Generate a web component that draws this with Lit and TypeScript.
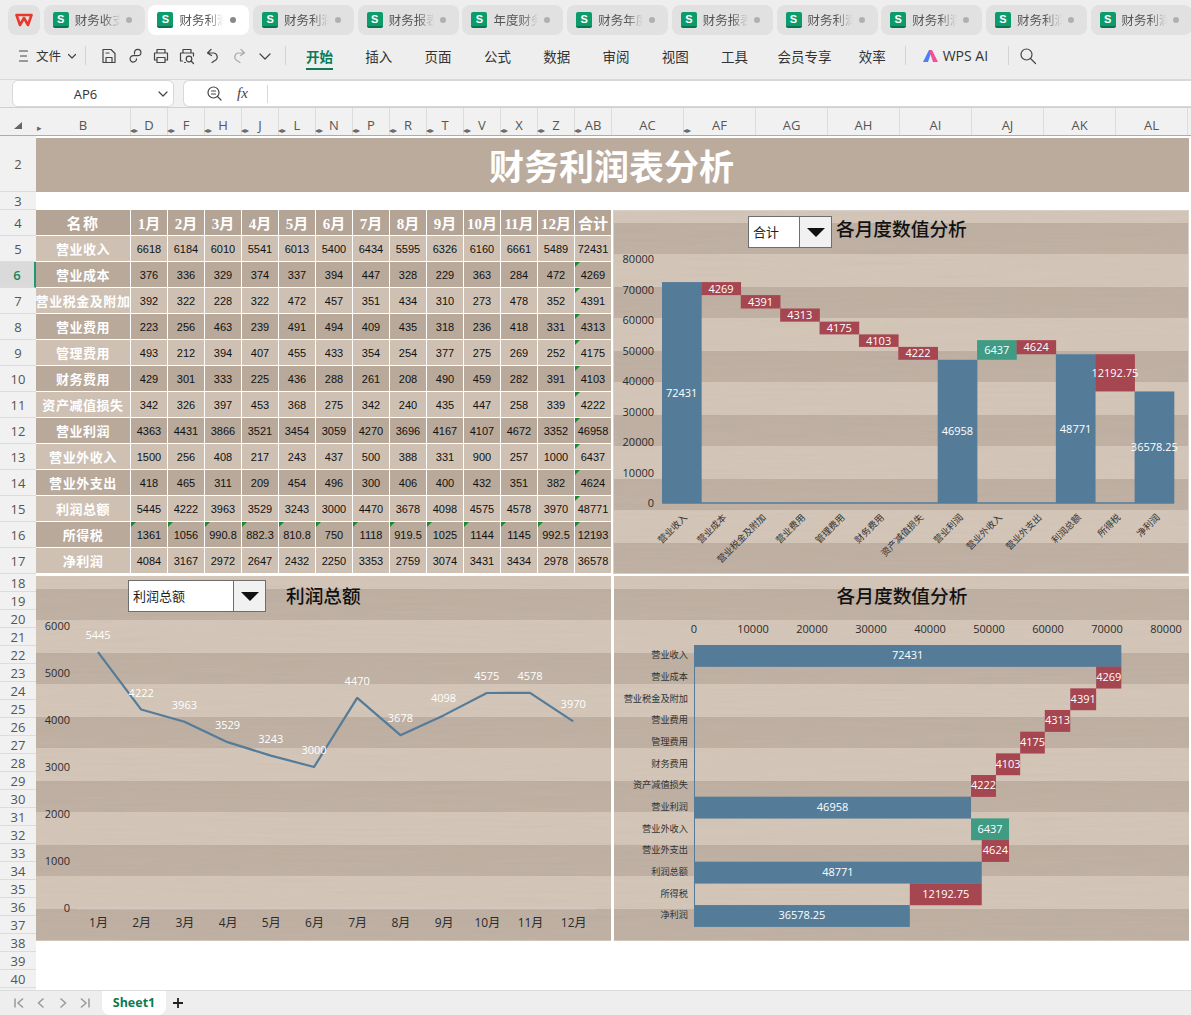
import { LitElement, html, css, svg } from "lit";
import { customElement } from "lit/decorators.js";

const MONTHS = ["1月","2月","3月","4月","5月","6月","7月","8月","9月","10月","11月","12月"];
const ROWS: [string, string[]][] = [
  ["营业收入","6618 6184 6010 5541 6013 5400 6434 5595 6326 6160 6661 5489 72431".split(" ")],
  ["营业成本","376 336 329 374 337 394 447 328 229 363 284 472 4269".split(" ")],
  ["营业税金及附加","392 322 228 322 472 457 351 434 310 273 478 352 4391".split(" ")],
  ["营业费用","223 256 463 239 491 494 409 435 318 236 418 331 4313".split(" ")],
  ["管理费用","493 212 394 407 455 433 354 254 377 275 269 252 4175".split(" ")],
  ["财务费用","429 301 333 225 436 288 261 208 490 459 282 391 4103".split(" ")],
  ["资产减值损失","342 326 397 453 368 275 342 240 435 447 258 339 4222".split(" ")],
  ["营业利润","4363 4431 3866 3521 3454 3059 4270 3696 4167 4107 4672 3352 46958".split(" ")],
  ["营业外收入","1500 256 408 217 243 437 500 388 331 900 257 1000 6437".split(" ")],
  ["营业外支出","418 465 311 209 454 496 300 406 400 432 351 382 4624".split(" ")],
  ["利润总额","5445 4222 3963 3529 3243 3000 4470 3678 4098 4575 4578 3970 48771".split(" ")],
  ["所得税","1361 1056 990.8 882.3 810.8 750 1118 919.5 1025 1144 1145 992.5 12193".split(" ")],
  ["净利润","4084 3167 2972 2647 2432 2250 3353 2759 3074 3431 3434 2978 36578".split(" ")],
];
const WF: { name: string; from: number; to: number; kind: string; label: string }[] = [
  ["营业收入",0,72431,"b","72431"],["营业成本",68162,72431,"r","4269"],["营业税金及附加",63771,68162,"r","4391"],
  ["营业费用",59458,63771,"r","4313"],["管理费用",55283,59458,"r","4175"],["财务费用",51180,55283,"r","4103"],
  ["资产减值损失",46958,51180,"r","4222"],["营业利润",0,46958,"b","46958"],["营业外收入",46958,53395,"g","6437"],
  ["营业外支出",48771,53395,"r","4624"],["利润总额",0,48771,"b","48771"],["所得税",36578.25,48771,"r","12192.75"],
  ["净利润",0,36578.25,"b","36578.25"],
].map((a: any) => ({ name: a[0], from: a[1], to: a[2], kind: a[3], label: a[4] }));
const COLOR: Record<string, string> = { b: "#547c99", r: "#a54651", g: "#3f9b83" };
const PROFIT = [5445,4222,3963,3529,3243,3000,4470,3678,4098,4575,4578,3970];

const TABS = ["财务收支","财务利润","财务利润","财务报表","年度财务","财务年度","财务报表","财务利润","财务利润","财务利润","财务利润"];
const COLS: [string, number, boolean][] = [
  ["B",95,true],["D",37,true],["F",37,true],["H",37,true],["J",37,true],["L",37,true],["N",37,true],["P",37,true],
  ["R",37,true],["T",37,true],["V",37,true],["X",37,true],["Z",37,true],["AB",37,false],["AC",72,true],
  ["AF",72,false],["AG",72,false],["AH",72,false],["AI",72,false],["AJ",72,false],["AK",72,false],["AL",72,false],
];
const MENU = ["插入","页面","公式","数据","审阅","视图","工具"];

function stripes(x: number, y: number, w: number, h: number) {
  const out = [svg`<rect x=${x} y=${y} width=${w} height=${h} fill="url(#lt)"/>`];
  for (let s = y + 13; s < y + h; s += 64) {
    out.push(svg`<rect x=${x} y=${s} width=${w} height=${Math.min(31, y + h - s)} fill="url(#dk)"/>`);
  }
  out.push(svg`<rect x=${x} y=${y} width=${w} height=${h} filter="url(#grain)" opacity="0.07"/>`);
  return out;
}
const defs = svg`<defs>
  <linearGradient id="lt" x1="0" y1="0" x2="0" y2="1"><stop offset="0" stop-color="#d3c5b7"/><stop offset="1" stop-color="#d3c5b7"/></linearGradient>
  <linearGradient id="dk" x1="0" y1="0" x2="0" y2="1"><stop offset="0" stop-color="#bdaea0"/><stop offset="1" stop-color="#bfb0a2"/></linearGradient>
  <filter id="grain" x="0" y="0" width="100%" height="100%"><feTurbulence type="fractalNoise" baseFrequency="0.012 0.35" numOctaves="2" seed="4"/><feColorMatrix type="saturate" values="0"/></filter>
</defs>`;

@customElement("app-root")
export class AppRoot extends LitElement {
  static styles = css`
    :host { display: block; width: 1191px; height: 1015px; overflow: hidden; background: #fff; font-family: "Noto Sans CJK SC", "Noto Sans", sans-serif; color: #333; }
    .tabbar { height: 36px; background: #eeeeee; display: flex; gap: 3.7px; padding: 5px 0 0 8px; box-sizing: border-box; overflow: hidden; }
    .logo { width: 32px; height: 30px; flex: none; border-radius: 8px; background: #e1e1e1; display: flex; align-items: center; justify-content: center; }
    .tab { width: 101px; height: 30px; flex: none; border-radius: 8px; background: #e1e1e1; display: flex; align-items: center; padding-left: 9px; box-sizing: border-box; }
    .tab.on { background: #fff; }
    .s { width: 16px; height: 16px; flex: none; border-radius: 2px; background: #0c9b6b; border-bottom: 2px solid #06754f; box-sizing: border-box; color: #fff; font: 700 11px/14px "Liberation Sans", sans-serif; text-align: center; }
    .tname { width: 50px; margin-left: 6px; font-size: 12.5px; line-height: 30px; white-space: nowrap; color: #555; -webkit-mask-image: linear-gradient(90deg, #000 56%, transparent 90%); mask-image: linear-gradient(90deg, #000 56%, transparent 90%); }
    .dot { width: 6px; height: 6px; border-radius: 50%; background: #b0b0b0; margin-left: 1px; flex: none; }
    .tab.on .dot { background: #888; }

    .toolbar { height: 44px; background: #eeeeee; border-bottom: 1px solid #d9d9d9; box-sizing: border-box; display: flex; align-items: center; padding: 0 0 4px 18px; }
    .file { font-size: 12.5px; margin-left: 6px; color: #333; }
    .ic { display: block; flex: none; fill: none; stroke: #444; stroke-width: 1.2; stroke-linecap: round; stroke-linejoin: round; }
    .ic.dim { stroke: #aaa; }
    .sep { width: 1px; height: 19px; background: #d4d4d4; flex: none; }
    .tools { display: flex; align-items: center; gap: 8px; margin: 0 11px 0 14px; }
    .menu { display: flex; gap: 32.3px; align-items: center; margin-left: 20px; margin-right: 19px; }
    .mi { font-size: 13.5px; color: #333; line-height: 24px; white-space: nowrap; }
    .mi.wide { margin: 0 -5px 0 -3px; }
    .mi.on { color: #0b7a55; font-weight: 700; position: relative; }
    .mi.on::after { content: ""; position: absolute; left: 0; right: 0; bottom: -2px; height: 2px; background: #0b7a55; }
    .ai { display: flex; align-items: center; gap: 4px; font: 14px "Open Sans", sans-serif; margin: 0 20px 0 17px; color: #333; }

    .fbar { height: 28px; background: #f1f1f1; display: flex; border-bottom: 1px solid #cfcfcf; box-sizing: border-box; padding-left: 12px; gap: 9px; }
    .namebox { width: 162px; background: #fff; border: 1px solid #d8d8d8; border-radius: 6px; box-sizing: border-box; display: flex; align-items: center; height: 27px; padding: 0 5px 0 0; font: 13px "Open Sans", sans-serif; }
    .namebox span { flex: 1; text-align: center; color: #333; }
    .fbox { flex: 1; background: #fff; border: 1px solid #d8d8d8; border-right: 0; border-radius: 6px 0 0 6px; height: 27px; box-sizing: border-box; display: flex; align-items: center; padding-left: 22px; gap: 14px; }
    .fx { font: italic 15px "Liberation Serif", serif; color: #444; width: 16px; }
    .fsep { width: 1px; height: 18px; background: #d8d8d8; }

    .colhdr { height: 28px; display: flex; background: #f1f1f1; border-bottom: 1px solid #b9a99a; box-sizing: border-box; font: 13px "Open Sans", sans-serif; color: #555; }
    .corner { width: 36px; flex: none; position: relative; }
    .corner::after { content: ""; position: absolute; left: 14px; top: 14px; border-left: 8px solid transparent; border-bottom: 7px solid #666; }
    .corner::before { content: "▸"; position: absolute; left: 37px; top: 14px; font-size: 9px; line-height: 12px; color: #666; }
    .ch { flex: none; box-sizing: border-box; border-right: 1px solid #dcdcdc; display: flex; align-items: center; justify-content: center; position: relative; padding-top: 7px; }
    .mk { position: absolute; right: -8px; bottom: 0; font-size: 8px; line-height: 11px; color: #666; letter-spacing: 0; z-index: 2; white-space: nowrap; }

    .sheet { display: flex; height: 854px; }
    .rowhdr { width: 36px; flex: none; background: #f1f1f1; display: flex; flex-direction: column; font: 13px "Open Sans", sans-serif; color: #555; overflow: hidden; }
    .rh { flex: none; display: flex; align-items: center; justify-content: center; box-sizing: border-box; border-bottom: 1px solid #dcdcdc; }
    .rh.sel { background: #dadada; color: #0f8a60; border-right: 2px solid #1b9a70; font-weight: 600; }
    .canvas { flex: 1; padding-top: 2px; display: flex; flex-direction: column; min-width: 0; }
    .title { width: 1153px; height: 54px; flex: none; box-sizing: border-box; padding-right: 2px; background: #baab9c; color: #fff; font-size: 35px; font-weight: 700; line-height: 54px; text-align: center; margin-bottom: 18px; }
    .upper { display: flex; gap: 1px; flex: none; height: 364px; margin-bottom: 2px; }
    .lower { display: flex; gap: 3px; flex: none; height: 365px; }

    .table { width: 576px; display: grid; grid-template-columns: 95px repeat(13, 37px); grid-auto-rows: 26px; flex: none; }
    .c { box-sizing: border-box; border-right: 1px solid #fff; border-bottom: 1px solid #fff; display: flex; align-items: center; justify-content: center; position: relative; font: 11px "Liberation Sans", sans-serif; color: #111; white-space: nowrap; overflow: hidden; }
    .lt { background: #cec1b4; }
    .dk { background: #b8a99b; }
    .hd { background: #b3a495; color: #fff; font: 700 15px "Liberation Serif", "Noto Sans CJK SC", serif; }
    .nm { color: #fff; font: 700 13px "Noto Sans CJK SC", sans-serif; letter-spacing: 0.55px; }
    .hname { letter-spacing: 1.5px; }
    .tri::before { content: ""; position: absolute; left: 0; top: 0; border-top: 5px solid #178a2f; border-right: 5px solid transparent; }

    .chart { position: relative; flex: none; height: 100%; }
    .chart svg { display: block; }
    .w576 { width: 576px; }
    .w575 { width: 575px; }
    .ctitle { font: 500 18.7px "Noto Sans CJK SC", sans-serif; fill: #111; }
    .tk { font: 11px "Open Sans", "Noto Sans CJK SC", sans-serif; fill: #2b2b2b; }
    .mo { font: 12px "Open Sans", "Noto Sans CJK SC", sans-serif; fill: #2b2b2b; }
    .cat { font: 9.2px "Noto Sans CJK SC", sans-serif; fill: #333; }
    .val { font: 11px "Open Sans", sans-serif; fill: #fff; }
    .dd { position: absolute; display: flex; background: #fff; border: 1px solid #6e6e6e; box-sizing: border-box; font-size: 13px; color: #222; height: 32px; }
    .dd .txt { flex: 1; padding-left: 4px; line-height: 30px; }
    .dd .arrow { width: 31px; background: #f1f1f1; border-left: 1px solid #6e6e6e; display: flex; align-items: center; justify-content: center; flex: none; }
    .dd .arrow i { border-left: 9px solid transparent; border-right: 9px solid transparent; border-top: 9px solid #111; }
    .dd1 { left: 135px; top: 6px; width: 84px; }
    .dd2 { left: 92px; top: 4px; width: 138px; }

    .footer { height: 25px; background: #eeeeee; border-top: 1px solid #dcdcdc; box-sizing: border-box; display: flex; align-items: center; padding-left: 13px; gap: 10px; }
    .nav { stroke: #9a9a9a; stroke-width: 1.5; fill: none; display: block; flex: none; }
    .stab { width: 64px; height: 24px; margin: -1px 0 0 1px; background: #fff; border-radius: 0 0 8px 8px; text-align: center; font: 700 12.5px/23px "Open Sans", sans-serif; color: #0d7a50; }
    .plus { stroke: #222; stroke-width: 1.8; flex: none; display: block; margin-left: -4px; }
  `;

  private waterfall() {
    const X0 = 662, BW = (1174 - 662) / 13, Y0 = 503, K = 30.5 / 10000;
    return svg`<svg width="576" height="364" viewBox="613 210 576 364">${defs}${stripes(613, 210, 576, 364)}
      <rect x="613.5" y="210.5" width="575" height="363" fill="none" stroke="#d8d0c8"/>
      <text class="ctitle" x="836" y="236">各月度数值分析</text>
      ${[0,1,2,3,4,5,6,7,8].map((i) => svg`<text class="tk" x="654" y=${Y0 - i * 30.5 + 4} text-anchor="end">${i ? i * 10000 : 0}</text>`)}
      ${WF.map((b, i) => {
        const x = X0 + i * BW, top = Y0 - b.to * K, h = (b.to - b.from) * K, ex = x + BW / 2 + 6;
        return svg`<rect x=${x} y=${top} width=${BW + 0.3} height=${h} fill=${COLOR[b.kind]}/>
          <text class="val" x=${x + BW / 2} y=${top + h / 2 + 4} text-anchor="middle">${b.label}</text>
          <text class="cat" text-anchor="end" x=${ex} y="518" transform="rotate(-45 ${ex} 518)">${b.name}</text>`;
      })}
      <line x1="662" x2="1174" y1="503" y2="503" stroke="#547c99" stroke-width="1.5"/>
    </svg>`;
  }

  private line() {
    const xAt = (i: number) => 98 + i * 43.2, yAt = (v: number) => 908 - v * 0.047;
    const pts = PROFIT.map((v, i) => `${xAt(i)},${yAt(v)}`).join(" ");
    return svg`<svg width="575" height="365" viewBox="36 576 575 365">${defs}${stripes(36, 576, 575, 365)}
      <text class="ctitle" x="286" y="603">利润总额</text>
      ${[0,1,2,3,4,5,6].map((i) => svg`<text class="tk" x="70" y=${908 - i * 47 + 4} text-anchor="end">${i * 1000}</text>`)}
      <line x1="77" x2="596" y1="908.5" y2="908.5" stroke="#d3cbc2" stroke-width="1.5"/>
      <polyline points=${pts} fill="none" stroke="#547c99" stroke-width="2.2" stroke-linejoin="round"/>
      ${PROFIT.map((v, i) => svg`<text class="val" x=${xAt(i)} y=${yAt(v) - 13} text-anchor="middle">${v}</text>`)}
      ${MONTHS.map((m, i) => svg`<text class="mo" x=${xAt(i) + 0.5} y="927" text-anchor="middle">${m}</text>`)}
    </svg>`;
  }

  private hbars() {
    const X0 = 694, K = 59 / 10000, Y0 = 645, BH = 21.67;
    return svg`<svg width="575" height="365" viewBox="614 576 575 365">${defs}${stripes(614, 576, 575, 365)}
      <text class="ctitle" x="902" y="603" text-anchor="middle">各月度数值分析</text>
      ${[0,1,2,3,4,5,6,7,8].map((i) => svg`<text class="tk" x=${X0 + i * 59} y="633" text-anchor="middle">${i * 10000}</text>`)}
      <line x1="694.5" x2="694.5" y1="645" y2="927" stroke="#547c99"/>
      ${WF.map((b, i) => {
        const y = Y0 + i * BH, x = X0 + b.from * K, w = (b.to - b.from) * K;
        return svg`<rect x=${x} y=${y} width=${w} height=${BH + 0.2} fill=${COLOR[b.kind]}/>
          <text class="val" x=${x + w / 2} y=${y + BH / 2 + 3.5} text-anchor="middle">${b.label}</text>
          <text class="cat" x="688" y=${y + BH / 2 + 2.5} text-anchor="end">${b.name}</text>`;
      })}
    </svg>`;
  }

  private toolbarIcons() {
    return html`
      <svg class="ic" width="18" height="18" viewBox="0 0 18 18"><path d="M3 2.500h8l4 4v9H3z M6 15.500v-5h6v5 M6 6h3"/></svg>
      <svg class="ic" width="18" height="18" viewBox="0 0 18 18"><path d="M8.500 7V5.500a3.200 3.200 0 1 1 3.200 3.200H7.500a3.200 3.200 0 1 0 3 3.200"/></svg>
      <svg class="ic" width="18" height="18" viewBox="0 0 18 18"><path d="M5 6V2.500h8V6 M5 13H2.500V6h13v7H13 M5 10.500h8v5H5z"/></svg>
      <svg class="ic" width="18" height="18" viewBox="0 0 18 18"><path d="M5 6V2.500h8V6 M4.500 14H2.500V6h13v3 M7.500 15.500h-1"/><circle cx="11" cy="12" r="2.800"/><path d="M13 14l2.500 2.500"/></svg>
      <svg class="ic" width="18" height="18" viewBox="0 0 18 18"><path d="M7 2.500L3.500 6l4 2.500 M3.500 6H10a4 4 0 0 1 1 7.500L8 15.500"/></svg>
      <svg class="ic dim" width="18" height="18" viewBox="0 0 18 18"><path d="M11 2.500L14.500 6l-4 2.500 M14.500 6H8a4 4 0 0 0-1 7.500l3 2"/></svg>
      <svg class="ic" width="18" height="18" viewBox="0 0 18 18"><path d="M4 7l5 5 5-5"/></svg>`;
  }

  render() {
    const rows: [number | string, number][] = [[2, 56], [3, 18]];
    for (let n = 4; n <= 17; n++) rows.push([n, 26]);
    for (let n = 18; n <= 40; n++) rows.push([n, 18]);
    return html`
      <div class="tabbar">
        <div class="logo"><svg width="18" height="16" viewBox="0 0 18 16"><path d="M1.500 3h15l-3.500 10-4-7-4 7z" fill="none" stroke="#e8382c" stroke-width="2.600" stroke-linejoin="round"/></svg></div>
        ${TABS.map((t, i) => html`<div class="tab ${i === 1 ? "on" : ""}"><div class="s">S</div><div class="tname">${t}</div><div class="dot"></div></div>`)}
      </div>

      <div class="toolbar">
        <svg class="ic" width="12" height="14" viewBox="0 0 12 14"><path d="M1.500 2h8 M2.500 7h6 M1.500 12h8"/></svg>
        <span class="file">文件</span>
        <svg class="ic" width="10" height="10" viewBox="0 0 10 10" style="margin:0 8px 0 6px"><path d="M1.500 3.500L5 7l3.500-3.500"/></svg>
        <div class="sep"></div>
        <div class="tools">${this.toolbarIcons()}</div>
        <div class="sep"></div>
        <div class="menu">
          <span class="mi on">开始</span>
          ${MENU.map((m) => html`<span class="mi">${m}</span>`)}
          <span class="mi wide">会员专享</span>
          <span class="mi">效率</span>
        </div>
        <div class="sep"></div>
        <div class="ai">
          <svg width="16" height="14" viewBox="0 0 16 14"><path d="M0 13L6 1h3L5 13z" fill="#4f7cf7"/><path d="M6 1h3l6 12h-5z" fill="#f0509a"/></svg>
          WPS AI
        </div>
        <div class="sep"></div>
        <svg class="ic" width="18" height="18" viewBox="0 0 18 18" style="margin-left:10px"><circle cx="7.500" cy="7.500" r="5.500"/><path d="M11.500 11.500L16.500 16.500"/></svg>
      </div>

      <div class="fbar">
        <div class="namebox"><span>AP6</span><svg class="ic" width="10" height="10" viewBox="0 0 10 10"><path d="M1 3l4 4 4-4"/></svg></div>
        <div class="fbox">
          <svg class="ic" width="17" height="17" viewBox="0 0 17 17"><circle cx="7.500" cy="7.500" r="5.500"/><path d="M11.500 11.500L15 15 M5.500 6h4 M5.500 9h4"/></svg>
          <span class="fx">fx</span>
          <div class="fsep"></div>
        </div>
      </div>

      <div class="colhdr">
        <div class="corner"></div>
        ${COLS.map(([l, w, m]) => html`<div class="ch" style="width:${w}px">${l}${m ? html`<span class="mk">◂▸</span>` : ""}</div>`)}
      </div>

      <div class="sheet">
        <div class="rowhdr">
          ${rows.map(([n, h]) => html`<div class="rh ${n === 6 ? "sel" : ""}" style="height:${h}px">${n}</div>`)}
        </div>
        <div class="canvas">
          <div class="title">财务利润表分析</div>
          <div class="upper">
            <div class="table">
              <div class="c hd hname">名称</div>
              ${MONTHS.map((m) => html`<div class="c hd">${m}</div>`)}
              <div class="c hd">合计</div>
              ${ROWS.map(([name, vals], r) => {
                const tone = r % 2 === 0 ? "lt" : "dk";
                return html`<div class="c nm ${tone}">${name}</div>
                  ${vals.map((v, i) => {
                    const tri = r === 11 || (i === 12 && r >= 1 && r <= 10);
                    return html`<div class="c ${tone} ${tri ? "tri" : ""}">${v}</div>`;
                  })}`;
              })}
            </div>
            <div class="chart w576">
              ${this.waterfall()}
              <div class="dd dd1"><span class="txt">合计</span><span class="arrow"><i></i></span></div>
            </div>
          </div>
          <div class="lower">
            <div class="chart w575">
              ${this.line()}
              <div class="dd dd2"><span class="txt">利润总额</span><span class="arrow"><i></i></span></div>
            </div>
            <div class="chart w575">${this.hbars()}</div>
          </div>
        </div>
      </div>

      <div class="footer">
        <svg class="nav" width="12" height="12" viewBox="0 0 12 12"><path d="M2 1.500v9 M10 1.500L5 6l5 4.500"/></svg>
        <svg class="nav" width="12" height="12" viewBox="0 0 12 12"><path d="M8.500 1.500L3.500 6l5 4.500"/></svg>
        <svg class="nav" width="12" height="12" viewBox="0 0 12 12"><path d="M3.500 1.500L8.500 6l-5 4.500"/></svg>
        <svg class="nav" width="12" height="12" viewBox="0 0 12 12"><path d="M10 1.500v9 M2 1.500L7 6l-5 4.500"/></svg>
        <div class="stab">Sheet1</div>
        <svg class="plus" width="12" height="12" viewBox="0 0 12 12"><path d="M6 1v10 M1 6h10"/></svg>
      </div>
    `;
  }
}
